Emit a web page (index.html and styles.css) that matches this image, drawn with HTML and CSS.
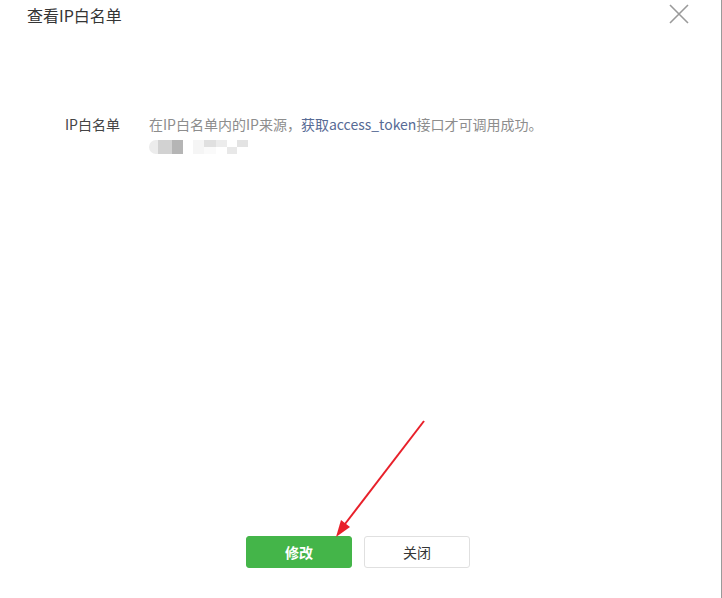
FILE: index.html
```html
<!DOCTYPE html>
<html lang="zh-CN">
<head>
    <meta charset="UTF-8">
    <title>查看IP白名单</title>
    <link rel="stylesheet" href="styles.css">
</head>
<body>
    <div class="dialog">
        <!-- 标题 -->
        <div class="dialog-head">
            <h3 class="dialog-title">查看IP白名单</h3>
            <svg class="close-icon" width="20" height="20" viewBox="0 0 20 20">
                <path d="M1 1 L19 19 M19 1 L1 19" stroke="#9a9a9a" stroke-width="1.6" fill="none"/>
            </svg>
        </div>

        <!-- 内容 -->
        <div class="dialog-body">
            <div class="form-row">
                <label class="form-label">IP白名单</label>
                <div class="form-value">
                    <p class="tips">在IP白名单内的IP来源，<a class="link">获取access_token</a>接口才可调用成功。</p>
                    <div class="ip-mosaic">
                        <span class="m m1"></span><span class="m m2"></span><span class="m m3"></span>
                        <span class="gap"></span>
                        <span class="m m4"></span><span class="m m5"></span><span class="m m6"></span><span class="m m7"></span><span class="m m8"></span>
                    </div>
                </div>
            </div>
        </div>

        <!-- 按钮 -->
        <div class="dialog-foot">
            <button class="btn btn-primary">修改</button>
            <button class="btn btn-default">关闭</button>
        </div>

        <!-- 标注箭头 -->
        <svg class="mark-arrow" width="722" height="598" viewBox="0 0 722 598">
            <line x1="424" y1="421" x2="345" y2="524" stroke="#e8202a" stroke-width="2"/>
            <polygon points="336,537 350,527 341,520" fill="#e8202a"/>
        </svg>
    </div>
</body>
</html>
```

FILE: styles.css
```css
body {
    margin: 0;
    font-family: "Noto Sans CJK SC", "Noto Sans", sans-serif;
    background-color: #fff;
    color: #353535;
}

.dialog {
    position: relative;
    height: 598px;
    width: 722px;
    box-sizing: border-box;
    border-right: 1px solid #9a9a9a;
    display: flex;
    flex-direction: column;
}

/* 标题 */
.dialog-head {
    height: 30px;
    padding: 0 32px 0 27px;
    display: flex;
    justify-content: space-between;
    align-items: center;
}

.dialog-title {
    margin: 0;
    font-size: 16px;
    font-weight: normal;
    line-height: 30px;
    color: #353535;
}

.close-icon {
    margin-top: -2px;
}

/* 内容 */
.dialog-body {
    padding: 83px 0 0 65px;
}

.form-row {
    display: flex;
    font-size: 14px;
    line-height: 22px;
}

.form-label {
    width: 84px;
    color: #444;
}

.tips {
    margin: 0;
    color: #8d8d8d;
}

.link {
    color: #576b95;
    text-decoration: none;
}

.ip-mosaic {
    display: flex;
    margin-top: 5px;
    height: 14px;
}

.m {
    width: 11px;
    height: 14px;
}

.gap {
    width: 10px;
}

.m1 { width: 9px; background-color: #ececec; border-radius: 7px 0 0 7px; }
.m2 { width: 14px; background-color: #d2d2d2; }
.m3 { background-color: #b5b5b5; }
.m4 { background-color: #f5f5f5; }
.m5 { width: 12px; background: linear-gradient(#e0e0e0 50%, #fafafa 50%); }
.m6 { background: linear-gradient(#ececec 50%, #fff 50%); }
.m7 { width: 10px; background: linear-gradient(#fff 50%, #e8e8e8 50%); }
.m8 { background: linear-gradient(#e3e3e3 50%, #fff 50%); }

/* 按钮 */
.dialog-foot {
    margin-top: auto;
    padding: 0 5px 30px 0;
    display: flex;
    justify-content: center;
    gap: 12px;
}

.btn {
    width: 106px;
    height: 32px;
    border-radius: 3px;
    font-family: inherit;
    font-size: 14px;
    cursor: pointer;
}

.btn-primary {
    background-color: #44b549;
    border: 1px solid #44b549;
    color: #fff;
    font-weight: bold;
}

.btn-default {
    background-color: #fff;
    border: 1px solid #e0e0e0;
    color: #353535;
}

/* 标注箭头 */
.mark-arrow {
    position: absolute;
    top: 0;
    left: 0;
    pointer-events: none;
}
```
